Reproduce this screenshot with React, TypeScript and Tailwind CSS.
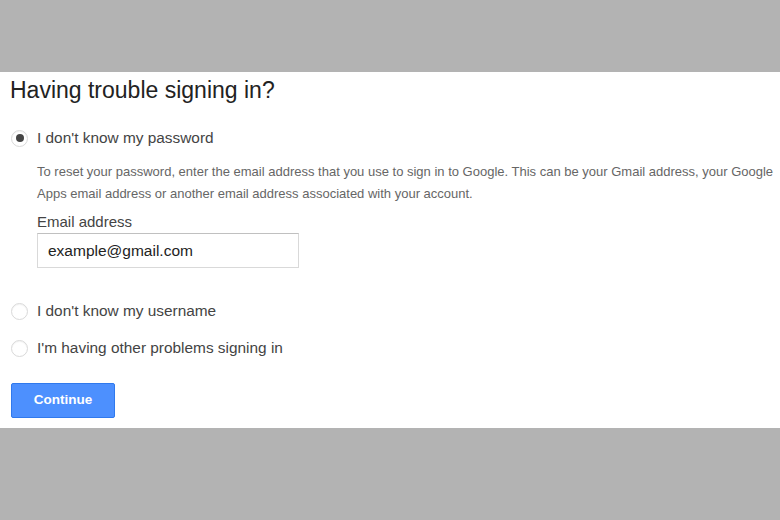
import React, { useState } from 'react';

const options = [
  { id: 'password', label: "I don't know my password" },
  { id: 'username', label: "I don't know my username" },
  { id: 'other', label: "I'm having other problems signing in" },
];

const Radio: React.FC<{ checked: boolean }> = ({ checked }) => (
  <span className="flex h-[17px] w-[17px] shrink-0 items-center justify-center rounded-full border border-[#d9d9d9] bg-white shadow-[inset_0_1px_1px_rgba(0,0,0,0.05)]">
    {checked && <span className="h-[8px] w-[8px] rounded-full bg-[#444]" />}
  </span>
);

const App: React.FC = () => {
  const [selected, setSelected] = useState('password');
  const [email, setEmail] = useState('example@gmail.com');

  return (
    <div className="flex h-[520px] w-[780px] flex-col bg-[#b3b3b3] font-['Liberation_Sans',Arial,sans-serif]">
      <div className="h-[72px]" />
      <div className="h-[356px] overflow-hidden bg-white pl-[10px]">
        <h1 className="mt-[5px] text-[23px] leading-[27px] text-[#222]">Having trouble signing in?</h1>

        <div className="mt-[25px]">
          <label className="flex cursor-pointer items-center gap-[9px] pl-[1px]" onClick={() => setSelected('password')}>
            <Radio checked={selected === 'password'} />
            <span className="text-[15.4px] leading-[18px] text-[#444]">{options[0].label}</span>
          </label>

          <div className="ml-[27px] mt-[14px]">
            <p className="whitespace-nowrap text-[13px] leading-[22px] text-[#666]">
              To reset your password, enter the email address that you use to sign in to Google. This can be your Gmail address, your Google
              <br />
              Apps email address or another email address associated with your account.
            </p>
            <div className="mt-[8px] text-[15px] leading-[18px] text-[#444]">Email address</div>
            <input
              value={email}
              onChange={(e) => setEmail(e.target.value)}
              className="mt-[2px] h-[35px] w-[262px] border border-[#d9d9d9] border-t-[#c0c0c0] bg-white px-[10px] text-[15.5px] text-[#222] outline-none"
            />
          </div>
        </div>

        <div className="mt-[34px] flex flex-col gap-[19px]">
          {options.slice(1).map((o) => (
            <label key={o.id} className="flex cursor-pointer items-center gap-[9px] pl-[1px]" onClick={() => setSelected(o.id)}>
              <Radio checked={selected === o.id} />
              <span className="text-[15.4px] leading-[18px] text-[#444]">{o.label}</span>
            </label>
          ))}
        </div>

        <button className="mt-[26px] ml-[1px] h-[35px] w-[104px] rounded-[2px] border border-[#3079ed] bg-[#4d90fe] text-[13.5px] font-bold text-white">
          Continue
        </button>
      </div>
      <div className="flex-1" />
    </div>
  );
};

export default App;
